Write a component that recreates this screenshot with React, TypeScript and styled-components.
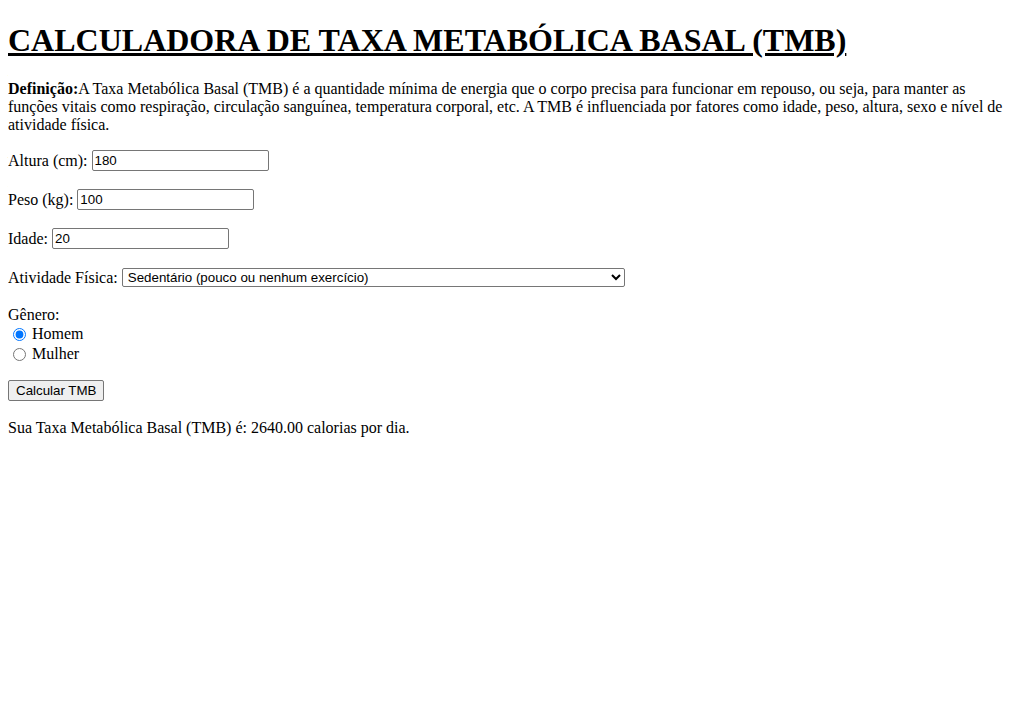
import React, { useState } from "react";
import styled, { createGlobalStyle } from "styled-components";

const Global = createGlobalStyle`
  body {
    margin: 8px;
    font-family: "Liberation Serif", "Times New Roman", serif;
    font-size: 16px;
    color: #000;
    background: #fff;
  }
`;

const Title = styled.h1`
  font-size: 32px;
  font-weight: bold;
  text-decoration: underline;
  margin: 14px 0 21px;
`;

const Definition = styled.p`
  margin: 16px 0 16px;
  line-height: 18px;
`;

const Field = styled.div`
  margin-bottom: 18px;
  line-height: 21px;
  display: flex;
  align-items: center;
`;

const Label = styled.label`
  margin-right: 4px;
`;

const TextInput = styled.input`
  box-sizing: border-box;
  width: 177px;
  height: 21px;
  font-family: "Liberation Sans", Arial, sans-serif;
  font-size: 13.33px;
  padding: 1px 2px;
  border: 1px solid #767676;
  border-radius: 2px;
  margin: 0;
`;

const Select = styled.select`
  box-sizing: border-box;
  width: 503px;
  height: 19px;
  font-family: "Liberation Sans", Arial, sans-serif;
  font-size: 13.33px;
  border: 1px solid #767676;
  border-radius: 2px;
  padding: 0 0 0 1px;
  margin: 0;
  background: #fff;
`;

const Gender = styled.div`
  margin-bottom: 16px;
`;

const RadioRow = styled.div`
  display: flex;
  align-items: center;
  height: 20px;
`;

const Radio = styled.input`
  width: 13px;
  height: 13px;
  margin: 0 6px 0 5px;
  accent-color: #0075ff;
`;

const Button = styled.button`
  font-family: "Liberation Sans", Arial, sans-serif;
  font-size: 13.33px;
  height: 21px;
  padding: 1px 7px;
  background: #efefef;
  border: 1px solid #767676;
  border-radius: 2px;
  color: #000;
  margin: 0;
`;

const Result = styled.p`
  margin: 18px 0;
`;

export default function App() {
  const [gender, setGender] = useState("homem");
  return (
    <>
      <Global />
      <Title>CALCULADORA DE TAXA METABÓLICA BASAL (TMB)</Title>
      <Definition>
        <b>Definição:</b>A Taxa Metabólica Basal (TMB) é a quantidade mínima de energia que o corpo precisa para funcionar em repouso, ou seja, para manter as funções vitais como respiração, circulação sanguínea, temperatura corporal, etc. A TMB é influenciada por fatores como idade, peso, altura, sexo e nível de atividade física.
      </Definition>
      <Field>
        <Label>Altura (cm):</Label>
        <TextInput defaultValue="180" />
      </Field>
      <Field>
        <Label>Peso (kg):</Label>
        <TextInput defaultValue="100" />
      </Field>
      <Field>
        <Label>Idade:</Label>
        <TextInput defaultValue="20" />
      </Field>
      <Field>
        <Label>Atividade Física:</Label>
        <Select defaultValue="sed">
          <option value="sed">Sedentário (pouco ou nenhum exercício)</option>
        </Select>
      </Field>
      <Gender>
        <div>Gênero:</div>
        <RadioRow>
          <Radio type="radio" name="g" checked={gender === "homem"} onChange={() => setGender("homem")} />
          Homem
        </RadioRow>
        <RadioRow>
          <Radio type="radio" name="g" checked={gender === "mulher"} onChange={() => setGender("mulher")} />
          Mulher
        </RadioRow>
      </Gender>
      <Button>Calcular TMB</Button>
      <Result>Sua Taxa Metabólica Basal (TMB) é: 2640.00 calorias por dia.</Result>
    </>
  );
}
